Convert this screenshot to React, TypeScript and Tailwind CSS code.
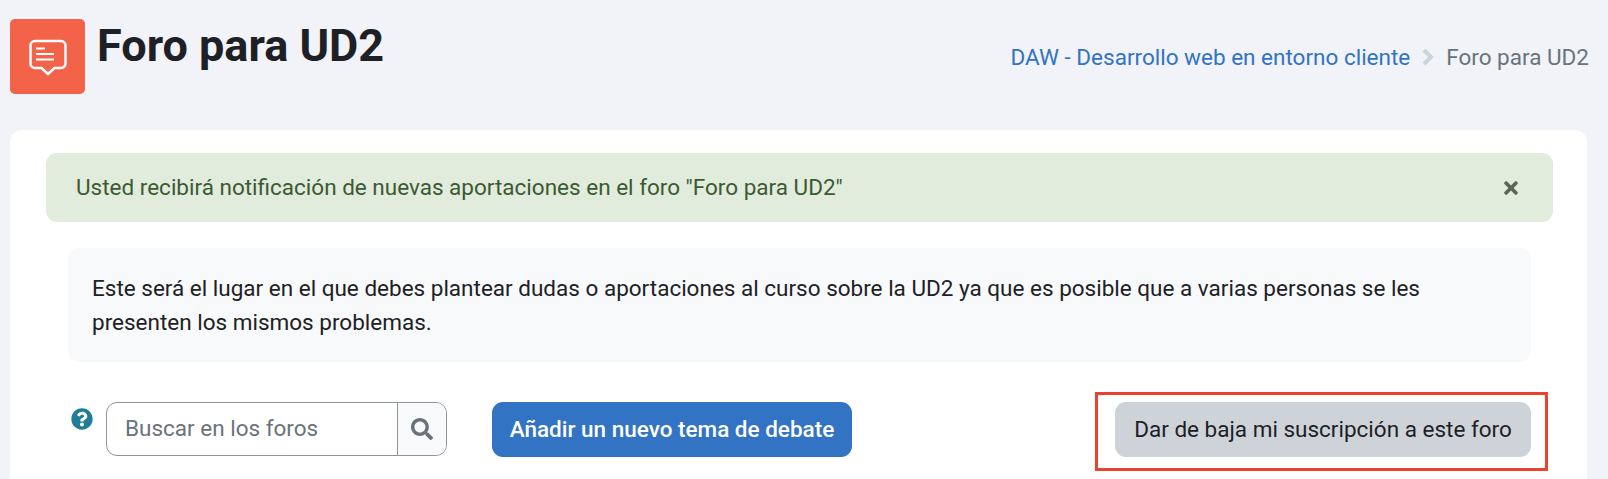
import { FaQuestionCircle, FaSearch, FaTimes } from 'react-icons/fa'

export default function App() {
  return (
    <div className="h-[479px] overflow-hidden bg-[#f1f3f8] pl-[10px] pr-[21px] font-['Roboto',sans-serif] text-[#1d2125]">
      <header className="flex h-[130px] items-start pt-[19px]">
        <div className="flex h-[75px] w-[75px] shrink-0 items-center justify-center rounded-[5px] bg-[#f2634a]">
          <svg width="38" height="38" viewBox="0 0 38 38" fill="none" stroke="#fff">
            <path d="M6 3h26a4.500 4.500 0 0 1 4.500 4.500v18a4.500 4.500 0 0 1-4.500 4.500h-6.500L19 36l-6.500-6H6a4.500 4.500 0 0 1-4.500-4.500v-18A4.500 4.500 0 0 1 6 3Z" strokeWidth="2.500" strokeLinejoin="round" />
            <path d="M7 10.500h9M7 16h18M7 21.500h18" strokeWidth="2" />
          </svg>
        </div>
        <h1 className="ml-[12px] text-[45px] font-bold leading-[54px]">Foro para UD2</h1>
        <nav className="-mr-[2px] ml-auto flex items-center pt-[23px] text-[22.5px] leading-[30px]">
          <a className="text-[#3273c4]">DAW - Desarrollo web en entorno cliente</a>
          <svg className="mx-[12px]" width="12" height="18" viewBox="0 0 12 18" fill="none" stroke="#ced4da" strokeWidth="4">
            <path d="M2 2l7 7-7 7" />
          </svg>
          <span className="text-[#6a737b]">Foro para UD2</span>
        </nav>
      </header>

      <main className="h-[349px] rounded-t-[12px] bg-white pl-[36px] pr-[34px] pt-[23px]">
        <div className="flex h-[69px] items-center justify-between rounded-[11px] bg-[#e1ecdd] pl-[30px] pr-[32px] text-[22.5px] text-[#3c5a32]">
          <span>Usted recibirá notificación de nuevas aportaciones en el foro "Foro para UD2"</span>
          <FaTimes size={20} className="text-[#5a6658]" />
        </div>

        <div className="mx-[22px] mt-[26px] h-[114px] rounded-[11px] bg-[#f8f9fa] px-[24px] pt-[23px] text-[22.5px] leading-[34px]">
          Este será el lugar en el que debes plantear dudas o aportaciones al curso sobre la UD2 ya que es posible que a varias personas se les presenten los mismos problemas.
        </div>

        <div className="mr-[22px] mt-[40px] flex items-start pl-[25px]">
          <FaQuestionCircle size={22} className="mt-[6px] text-[#1f7e94]" />
          <div className="ml-[13px] flex h-[54px] w-[341px] overflow-hidden rounded-[11px] border border-[#8f959e]">
            <div className="flex flex-1 items-center pl-[18px] text-[22.5px] text-[#6a737b]">Buscar en los foros</div>
            <div className="flex w-[49px] items-center justify-center border-l border-[#8f959e] bg-[#f8f9fa]">
              <FaSearch size={22} className="text-[#6a737b]" />
            </div>
          </div>
          <button className="ml-[45px] h-[55px] w-[360px] rounded-[11px] bg-[#3273c4] text-[22.5px] font-medium text-white">
            Añadir un nuevo tema de debate
          </button>
          <div className="relative ml-auto">
            <button className="h-[55px] w-[416px] rounded-[11px] bg-[#ced3da] text-[22.5px]">
              Dar de baja mi suscripción a este foro
            </button>
            <div className="absolute -left-[20px] -top-[10px] h-[79px] w-[453px] border-[3px] border-[#e8432f]" />
          </div>
        </div>
      </main>
    </div>
  )
}
